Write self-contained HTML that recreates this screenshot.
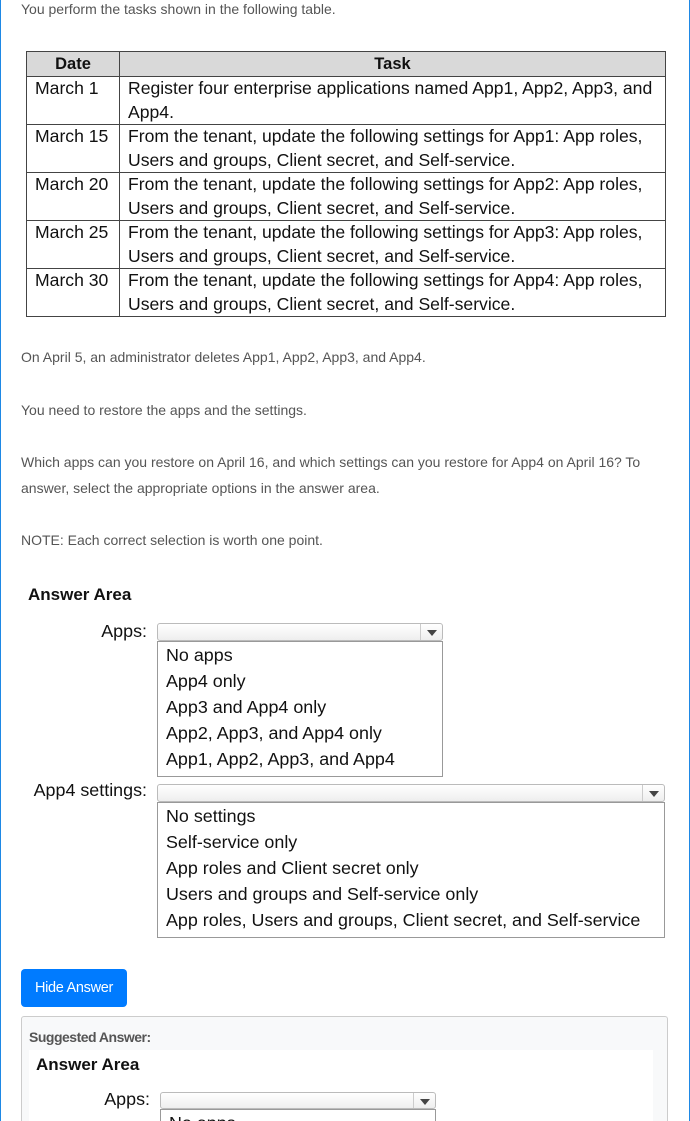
<!DOCTYPE html>
<html><head><meta charset="utf-8"><style>
html{overflow:hidden;height:1121px}
body{margin:0;width:690px;height:1121px;overflow:hidden;background:#fff;position:relative;font-family:"Liberation Sans",sans-serif}
.frame{position:absolute;left:0;top:0;width:688px;height:1121px;border-left:1px solid #1e88e5;border-right:1px solid #1e88e5}
.t{position:absolute;white-space:nowrap;color:#555;font-size:14px;line-height:18px;letter-spacing:0}
table{position:absolute;left:26px;top:51px;width:640px;border-collapse:collapse;font-size:17.6px;line-height:23.5px;color:#111;letter-spacing:0}
td,th{border:1px solid #444;padding:0 0 0 8px;vertical-align:top;text-align:left}
th{background:#d9d9d9;text-align:center;padding:0;font-size:16.5px;line-height:24px}
.a{position:absolute;white-space:nowrap;color:#111;font-size:17.9px;line-height:26px}
.dd{position:absolute;border:1px solid #bbb;border-radius:3px;background:linear-gradient(#fff,#eee);box-sizing:border-box}
.dd:after{content:"";position:absolute;right:5px;top:6px;border-left:5px solid transparent;border-right:5px solid transparent;border-top:6px solid #444}
.dd:before{content:"";position:absolute;right:21px;top:0;bottom:0;border-left:1px solid #ccc}
.ls{position:absolute;border:1px solid #999;box-sizing:border-box;background:#fff}
</style></head><body>
<div class="frame"></div>
<div class="t" style="left:21px;top:0">You perform the tasks shown in the following table.</div>
<table>
<tr><th style="width:92px">Date</th><th>Task</th></tr>
<tr><td>March 1</td><td>Register four enterprise applications named App1, App2, App3, and<br>App4.</td></tr>
<tr><td>March 15</td><td>From the tenant, update the following settings for App1: App roles,<br>Users and groups, Client secret, and Self-service.</td></tr>
<tr><td>March 20</td><td>From the tenant, update the following settings for App2: App roles,<br>Users and groups, Client secret, and Self-service.</td></tr>
<tr><td>March 25</td><td>From the tenant, update the following settings for App3: App roles,<br>Users and groups, Client secret, and Self-service.</td></tr>
<tr><td>March 30</td><td>From the tenant, update the following settings for App4: App roles,<br>Users and groups, Client secret, and Self-service.</td></tr>
</table>
<div class="t" style="left:21px;top:348px">On April 5, an administrator deletes App1, App2, App3, and App4.</div>
<div class="t" style="left:21px;top:401px">You need to restore the apps and the settings.</div>
<div class="t" style="left:21px;top:453px">Which apps can you restore on April 16, and which settings can you restore for App4 on April 16? To</div>
<div class="t" style="left:21px;top:479px">answer, select the appropriate options in the answer area.</div>
<div class="t" style="left:21px;top:531px">NOTE: Each correct selection is worth one point.</div>

<div class="a" style="left:28px;top:582px;font-weight:bold;font-size:17px">Answer Area</div>
<div class="a" style="right:543px;top:618px">Apps:</div>
<div class="dd" style="left:157px;top:623px;width:286px;height:18px"></div>
<div class="ls" style="left:157px;top:641px;width:286px;height:136px"></div>
<div class="a" style="left:166px;top:642px">No apps</div>
<div class="a" style="left:166px;top:668px">App4 only</div>
<div class="a" style="left:166px;top:694px">App3 and App4 only</div>
<div class="a" style="left:166px;top:720px">App2, App3, and App4 only</div>
<div class="a" style="left:166px;top:746px">App1, App2, App3, and App4</div>
<div class="a" style="right:543px;top:777px">App4 settings:</div>
<div class="dd" style="left:157px;top:784px;width:508px;height:18px"></div>
<div class="ls" style="left:157px;top:802px;width:508px;height:136px"></div>
<div class="a" style="left:166px;top:803px">No settings</div>
<div class="a" style="left:166px;top:829px">Self-service only</div>
<div class="a" style="left:166px;top:855px">App roles and Client secret only</div>
<div class="a" style="left:166px;top:881px">Users and groups and Self-service only</div>
<div class="a" style="left:166px;top:907px">App roles, Users and groups, Client secret, and Self-service</div>

<div style="position:absolute;left:21px;top:969px;width:106px;height:38px;background:#007bff;border-radius:4px;color:#fff;font-size:14.5px;line-height:38px;text-align:center;letter-spacing:-0.3px">Hide Answer</div>
<div style="position:absolute;left:21px;top:1016px;width:647px;height:105px;background:#f8f9fa;border:1px solid #ccc;border-bottom:none;border-radius:3px 3px 0 0;box-sizing:border-box"></div>
<div class="t" style="left:29px;top:1028px;font-weight:bold;color:#555;letter-spacing:-0.5px">Suggested Answer:</div>
<div style="position:absolute;left:29px;top:1050px;width:624px;height:71px;background:#fff"></div>
<div class="a" style="left:36px;top:1052px;font-weight:bold;font-size:17px">Answer Area</div>
<div class="a" style="right:540px;top:1086px">Apps:</div>
<div class="dd" style="left:160px;top:1092px;width:276px;height:17px"></div>
<div class="ls" style="left:160px;top:1109px;width:276px;height:12px;border-bottom:none;overflow:hidden"><div style="position:absolute;left:8px;top:0;font-size:17.9px;line-height:26px;color:#111;white-space:nowrap">No apps</div></div>
</body></html>
